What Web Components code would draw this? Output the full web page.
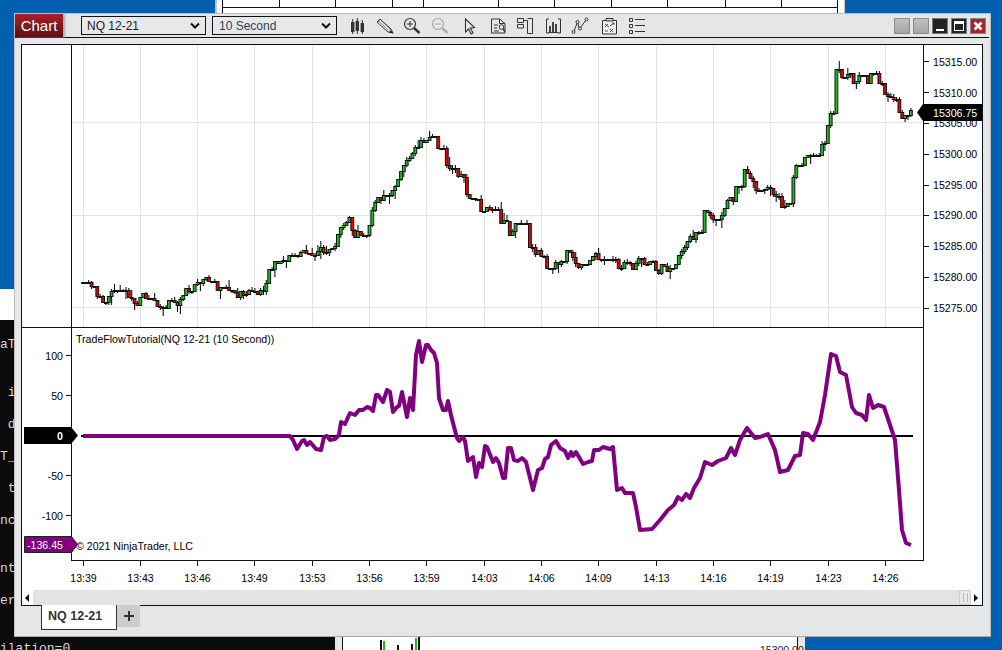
<!DOCTYPE html>
<html><head><meta charset="utf-8"><title>Chart</title>
<style>html,body{margin:0;padding:0;background:#0060b0;overflow:hidden}</style></head>
<body>
<nt-desktop>
  <nt-terminal slot="back"></nt-terminal>
  <nt-backwin slot="back"></nt-backwin>
  <nt-window>
    <nt-titlebar slot="title">
      <nt-select>NQ 12-21</nt-select>
      <nt-select tint>10 Second</nt-select>
    </nt-titlebar>
    <nt-chart></nt-chart>
    <nt-tabs slot="tabs"></nt-tabs>
  </nt-window>
</nt-desktop>
<script>
const def=(n,css,html,extra)=>{customElements.define(n,class extends HTMLElement{
  constructor(){super();this.attachShadow({mode:'open'}).innerHTML=`<style>${css}</style>${typeof html==='function'?html():html}`;}
});};
const FONT='"Liberation Sans",Arial,sans-serif';

def('nt-desktop',`:host{display:block;position:relative;width:1002px;height:650px;overflow:hidden;background:#0060b0;font-family:${FONT}}`,
 `<slot name="back"></slot><slot></slot>`);

def('nt-terminal',`:host{display:block;position:absolute;left:0;top:289px;width:335px;height:361px;background:#fff}
 .k{position:absolute;left:0;top:31px;right:0;bottom:0;background:#0b0b0b;color:#d8d8d8;font:13px/16px "Liberation Mono",monospace;padding-top:17px;box-sizing:border-box}
 .col{width:14px;height:304px;overflow:hidden;white-space:pre}
 .last{width:80px;white-space:pre}`,
 `<div class="k"><div class="col">${['aT','','',' i','',' d','','T_','',' t','','nc','','','nt','','er','',''].join('\n')}</div><div class="last">ilation=0</div></div>`);

def('nt-backwin',`:host{display:contents}
 .top{position:absolute;left:215px;top:0;width:630px;height:13px;background:#fff;border-left:2px solid #c4c4c4;border-right:1px solid #c4c4c4;box-sizing:border-box}
 .bot{position:absolute;left:335px;top:637px;width:470px;height:13px;background:#e4e6e8}
 svg{display:block;position:absolute;left:0;top:0}`,
 ()=>{
  const ticks=[279,335,392,423,498,554,611,667,725,781].map(x=>`<path d="M${x+.5-217} 0V7" stroke="#111"/>`).join('');
  const c=[[381,640,650,'#111'],[384,641,650,'#1db81d'],[398,645,650,'#111'],[412,644,650,'#111'],[416,638,650,'#1db81d'],[419,637,650,'#111']]
    .map(([x,a,b,s])=>`<path d="M${x-335} ${a-637}V${b-637}" stroke="${s}" stroke-width="2"/>`).join('');
  return `<div class="top"><svg width="627" height="13"><path d="M5.5 0V13M620.5 0V13M5 7.5H621" stroke="#111" fill="none"/>${ticks}</svg></div>
  <div class="bot"><svg width="470" height="13"><rect x="7" width="456" height="13" fill="#fff"/><path d="M7.5 0V13M462.5 0V13" stroke="#111"/>${c}
  <text x="425" y="17" font-family='"Liberation Sans",sans-serif' font-size="10.5" fill="#222">15300.00</text></svg></div>`;
 });

def('nt-window',`:host{display:flex;flex-direction:column;position:absolute;left:14px;top:13px;width:977px;height:624px;box-sizing:border-box;background:#e4e6e8;border:1px solid #bdbdbd;border-bottom-color:#a9a9a9}
 .body{padding:6px 7px 0 6px;flex:none}
 `,`<slot name="title"></slot><div class="body"><slot></slot></div><slot name="tabs"></slot>`);

const icons=[
 `<path d="M9.7 5V20M14.3 4V20M19.3 6V20" stroke="#333"/><rect x="8" y="8" width="3.4" height="10" fill="#333"/><rect x="12.6" y="7" width="3.4" height="10" fill="#333"/><rect x="17.6" y="9" width="3.4" height="9" fill="#333"/>`,
 `<path d="M6 8L9 5L20 15L22 19L17 18Z" fill="#fff" stroke="#333"/><path d="M8 7.5L18.5 17M10 6.5L19.5 15.5M7 8L9.5 6" stroke="#555" stroke-width=".8"/><path d="M19.8 16L22.5 19.5L18 18.6Z" fill="#222"/>`,
 `<circle cx="11" cy="10" r="5.5" fill="none" stroke="#333" stroke-width="1.2"/><path d="M8 10H14M11 7V13" stroke="#333"/><path d="M15 14L20.5 19" stroke="#333" stroke-width="2.4"/>`,
 `<circle cx="11" cy="10" r="5.5" fill="none" stroke="#aaa" stroke-width="1.2"/><path d="M8 10H14" stroke="#aaa"/><path d="M15 14L20.5 19" stroke="#aaa" stroke-width="2.4"/>`,
 `<path d="M10.5 5L19.5 13.5L15.5 14L18 19L16 20L13.7 15L10.5 18Z" fill="none" stroke="#333" stroke-width="1.1"/>`,
 `<path d="M16.5 5H8.5V19H22V9.5Z M16.5 5V9.5H22" fill="none" stroke="#333"/><path d="M11 11H15M11 14H14M11 17H16" stroke="#333"/><circle cx="18.5" cy="13" r="2.3" fill="#e4e6e8" stroke="#333"/><path d="M20 15L22 17.5" stroke="#333" stroke-width="1.5"/>`,
 `<path d="M6.5 4.5H12.5V8.5H6.5ZM6.5 10.5H12.5V14H6.5ZM12.5 6.5H16.5V19.5H21.5V4.5H16.5" fill="none" stroke="#333"/>`,
 `<path d="M10 5H7.5V19H10M19 5H21.5V19H19" fill="none" stroke="#333"/><path d="M11 12V18M14 8V18M17 10V18" stroke="#333" stroke-width="1.8"/><path d="M9.5 18.5H19.5" stroke="#333"/>`,
 `<path d="M6.5 18.5L10.5 8L12.5 15L19 6" fill="none" stroke="#333"/><circle cx="6.5" cy="18" r="1.5" fill="#e4e6e8" stroke="#333"/><circle cx="10.5" cy="8" r="1.5" fill="#e4e6e8" stroke="#333"/><circle cx="13" cy="14.5" r="1.5" fill="#e4e6e8" stroke="#333"/><circle cx="19.5" cy="5.5" r="1.5" fill="#e4e6e8" stroke="#333"/>`,
 `<path d="M7.5 6.5H21.5V20H7.5Z" fill="#f0f0f0" stroke="#333"/><path d="M11 4.5H18V7H11Z" fill="#ddd" stroke="#333"/><path d="M10 10L14 13M10 13L13 10M15 12L19 9M17 9H19V11M15 15L18 18M18 15L15 18M10 17H13" stroke="#444" stroke-width=".9" fill="none"/>`,
 `<path d="M6.5 4.5H9.5V7.5H6.5ZM6.5 10.5H9.5V13.5H6.5ZM6.5 16.5H9.5V19.5H6.5Z" fill="none" stroke="#333"/><path d="M12 5.5H22M12 11.5H22M12 17.5H22" stroke="#333"/>`
];
def('nt-titlebar',`:host{display:flex;align-items:center;height:24px;box-sizing:border-box;border-bottom:1px solid #111;font-family:${FONT};flex:none;width:974px}
 .chart{width:48px;height:23px;box-sizing:border-box;background:linear-gradient(#ad2027,#5b1015);color:#fff;font-size:15px;line-height:23px;text-align:center;box-shadow:2px 0 2px #aaa;flex:none}
 .sel{display:flex;gap:6px;margin-left:18px;flex:none}
 .tools{display:flex;margin-left:6px;flex:none}
 .tools svg{display:block;width:28px;height:24px}
 .wb{display:flex;gap:3px;margin-left:auto;margin-right:3px;flex:none}
 .b{width:16px;height:16px;box-sizing:border-box;border:1px solid #8c8c8c;background:linear-gradient(#c0bebe,#a6a4a4)}
 .d{background:#232325;border-color:#77797b;position:relative}
 .min::after{content:"";position:absolute;left:3px;right:3px;bottom:2px;height:2px;background:#fff}
 .max::after{content:"";position:absolute;left:2px;right:2px;top:2px;bottom:2px;border:1px solid #fff;border-top-width:3px;box-sizing:border-box}
 .x{background:#a8242c;border-color:#888;padding:0}
 .x svg{display:block}`,
 `<div class="chart">Chart</div><div class="sel"><slot></slot></div>
 <div class="tools">${icons.map(i=>`<svg viewBox="0 0 28 24">${i}</svg>`).join('')}</div>
 <div class="wb"><div class="b"></div><div class="b"></div><div class="b d min"></div><div class="b d max"></div>
 <div class="b x"><svg width="14" height="14"><path d="M3.5 3.5L10.5 10.5M10.5 3.5L3.5 10.5" stroke="#fff" stroke-width="2.6"/></svg></div></div>`);

customElements.define('nt-select',class extends HTMLElement{constructor(){super();
 this.attachShadow({mode:'open'}).innerHTML=`<style>:host{display:flex;align-items:center;width:125px;height:19px;box-sizing:border-box;border:1px solid #111;padding:0 5px;font:12px ${FONT};color:#1c1c1c;background:#e6e8e9}
 :host([tint]){color:#3a3a55;padding-left:6px}
 span{flex:1}svg{display:block}</style><span><slot></slot></span><svg width="10" height="8"><path d="M1 1.5L5 5.5L9 1.5" fill="none" stroke="#111" stroke-width="2"/></svg>`;}});

def('nt-tabs',`:host{display:flex;margin:-1px 0 0 26px;flex:none;font-family:${FONT};position:relative}
 .t{width:76px;height:25px;box-sizing:border-box;background:#fff;border:1px solid #333;border-top:none;font-weight:700;font-size:12.5px;line-height:23px;padding-left:6px;color:#333}
 .p{width:23px;height:22px;background:#cdcdcd;display:flex;align-items:center;justify-content:center}`,
 `<div class="t">NQ 12-21</div><div class="p"><svg width="12" height="12"><path d="M6 1V11M1 6H11" stroke="#333" stroke-width="2"/></svg></div>`);

/* chart */
const PTS=[[83,282],[88,283],[93,285],[94,295],[108,302],[112,293],[115,288],[122,297],[125,307],[128,293],[138,303],[142,294],[152,298],[160,305],[167,309],[169,302],[177,302],[180,307],[182,297],[187,290],[193,287],[200,280],[207,280],[213,285],[227,292],[233,290],[237,295],[247,293],[252,288],[260,293],[267,285],[272,263],[282,263],[283,261],[292,257],[297,263],[300,253],[310,250],[318,255],[323,248],[332,252],[338,240],[340,227],[345,228],[350,216],[355,235],[363,232],[370,225],[375,205],[378,195],[383,198],[388,188],[395,192],[402,173],[408,160],[415,151],[420,145],[425,139],[435,139],[438,148],[445,150],[449,167],[455,165],[458,178],[464,174],[468,197],[475,194],[478,210],[483,212],[488,207],[497,210],[500,221],[508,219],[511,233],[515,227],[520,222],[527,223],[528,238],[535,253],[540,252],[545,255],[548,265],[555,266],[558,262],[565,260],[568,253],[575,258],[578,266],[588,265],[592,260],[595,254],[607,260],[613,263],[617,273],[622,268],[625,262],[633,263],[636,272],[638,257],[642,257],[645,265],[650,259],[657,268],[660,271],[662,263],[668,270],[675,269],[679,258],[685,247],[690,236],[696,237],[700,228],[703,213],[710,210],[713,223],[717,216],[722,217],[725,211],[730,197],[734,203],[737,183],[740,177],[747,170],[753,177],[757,187],[763,188],[768,187],[777,194],[779,209],[783,205],[788,210],[791,185],[794,176],[797,165],[802,167],[803,156],[807,158],[812,153],[820,152],[823,142],[828,139],[829,120],[833,107],[836,87],[837,66],[841,66],[844,78],[847,76],[852,72],[853,81],[860,77],[864,67],[867,82],[871,83],[872,66],[877,66],[878,78],[883,86],[886,96],[892,97],[897,102],[900,112],[905,118],[909,113],[912,112]];
const IND=[[83,436],[290,436],[293,440],[297,449],[302,441],[304,440],[307,445],[310,442],[316,449],[321,450],[324,437],[327,436],[330,440],[335,439],[339,435],[341,422],[345,424],[350,413],[355,415],[359,410],[363,410],[367,407],[370,408],[373,411],[376,395],[378,395],[383,402],[387,390],[390,392],[393,412],[397,407],[399,406],[402,392],[407,417],[410,398],[413,410],[416,355],[419,341],[422,362],[426,345],[428,345],[431,350],[434,353],[437,363],[439,398],[443,410],[446,410],[448,401],[451,415],[453,423],[457,438],[459,441],[463,437],[465,441],[468,461],[473,457],[476,477],[479,463],[482,467],[485,446],[487,447],[493,462],[496,458],[499,463],[503,478],[505,478],[508,448],[511,448],[514,460],[518,461],[522,458],[526,462],[533,490],[538,470],[542,468],[545,459],[548,457],[551,445],[556,441],[560,448],[565,451],[568,458],[571,452],[573,456],[576,452],[583,464],[588,462],[592,461],[594,450],[599,450],[603,447],[610,449],[613,447],[617,490],[622,488],[625,493],[633,493],[636,507],[640,530],[652,529],[660,520],[668,510],[674,505],[678,497],[682,500],[686,494],[690,498],[694,488],[700,478],[705,462],[712,465],[718,461],[726,458],[731,448],[735,455],[740,440],[747,428],[755,438],[760,437],[768,434],[775,450],[780,472],[788,470],[795,456],[800,455],[803,433],[808,434],[813,440],[820,422],[825,395],[831,354],[836,356],[840,372],[846,375],[852,407],[856,413],[862,415],[866,420],[869,395],[873,408],[878,405],[884,407],[890,425],[895,440],[899,490],[902,530],[906,543],[911,545]];
function interp(x){for(let i=1;i<PTS.length;i++){if(x<=PTS[i][0]){const a=PTS[i-1],b=PTS[i],d=b[0]-a[0]||1;return a[1]+(b[1]-a[1])*(x-a[0])/d;}}return PTS[PTS.length-1][1];}
let seed=4711;const rnd=()=>{seed=(seed*1664525+1013904223)>>>0;return seed/4294967296;};
function candles(){
 let out='',prev=282;const dx=2.8646;
 for(let i=0;i<290;i++){
  const x=83+i*dx;
  if(x>913)break;
  const hold=rnd()<.25;
  const close=hold?prev:Math.round(interp(x+1)+(rnd()-.5)*6);
  const open=Math.round(prev);
  const top=Math.min(open,close),bot=Math.max(open,close);
  const wt=rnd()<.55?Math.round(1+rnd()*(rnd()<.25?7:2)):0, wb=rnd()<.55?Math.round(1+rnd()*(rnd()<.3?9:3)):0;
  out+=`<path d="M${x.toFixed(1)} ${top-wt}V${bot+wb}" stroke="#111" stroke-width="1.1"/>`;
  const h=Math.max(bot-top,1);
  out+=`<rect x="${(x-1.4).toFixed(1)}" y="${top+.5}" width="2.8" height="${h}" fill="${close<=open?'#14c21e':'#f00000'}" stroke="#111" stroke-width="1"/>`;
  prev=close;
 }
 return out;
}
const GX=[83,140,197,254,312,369,426,484,541,598,656,713,770,828,885];
const TL=['13:39','13:43','13:46','13:49','13:53','13:56','13:59','14:03','14:06','14:09','14:13','14:16','14:19','14:23','14:26'];
const PR=[[61.5,'15315.00'],[92.5,'15310.00'],[123,'15305.00'],[154,'15300.00'],[185,'15295.00'],[215,'15290.00'],[246,'15285.00'],[277,'15280.00'],[308,'15275.00']];
const LA=[[356,'100'],[396,'50'],[476,'-50'],[516,'-100']];
function chartSvg(){
 let s='';
 GX.forEach(x=>s+=`<path d="M${x+.5} 45V327" stroke="#e3e3e3"/>`);
 [122,215,307].forEach(y=>s+=`<path d="M73 ${y+.5}H923" stroke="#e3e3e3"/>`);
 s+=candles();
 s+=`<path d="M71.5 45V560M923.5 45V560M22 327.5H923M71 560.5H924" stroke="#111" fill="none"/>`;
 GX.forEach((x,i)=>s+=`<path d="M${x+.5} 560V566" stroke="#111"/><text x="${x+.5}" y="582" text-anchor="middle">${TL[i]}</text>`);
 PR.forEach(([y,t])=>s+=`<path d="M924 ${Math.floor(y)+.5}H929" stroke="#111"/><text x="933" y="${y+4}">${t}</text>`);
 LA.forEach(([y,t])=>s+=`<path d="M66 ${y-.5}H71" stroke="#111"/><text x="63" y="${y+3.5}" text-anchor="end">${t}</text>`);
 s+=`<path d="M66 436H71" stroke="#111"/>`;
 s+=`<text x="76" y="343">TradeFlowTutorial(NQ 12-21 (10 Second))</text><text x="76" y="550">© 2021 NinjaTrader, LLC</text>`;
 s+=`<path d="M84 436H913" stroke="#000" stroke-width="2"/>`;
 s+=`<polyline points="${IND.map(p=>p.join(',')).join(' ')}" fill="none" stroke="#800080" stroke-width="4" stroke-linejoin="round"/>`;
 s+=`<rect x="81" y="435" width="2" height="2" fill="#000"/>`;
 s+=`<path d="M923 104H983V121H923L917 112.5Z" fill="#000"/><text x="933" y="117" fill="#fff" font-weight="400">15306.75</text>`;
 s+=`<path d="M24 427H71L78 435.5L71 444H24Z" fill="#000"/><text x="60" y="440" fill="#fff" font-weight="700" text-anchor="middle">0</text>`;
 s+=`<path d="M24.5 536.5H71.5L77.5 544.5L71.5 552.5H24.5Z" fill="#800080" stroke="#222"/><text x="27" y="549" fill="#fff">-136.45</text>`;
 return `<svg width="960" height="545" viewBox="22 45 960 545" font-family='"Liberation Sans",sans-serif' font-size="10.6" fill="#000">${s}</svg>`;
}
def('nt-chart',`:host{display:flex;flex-direction:column;width:962px;height:562px;box-sizing:border-box;border:1px solid #111;background:#fff}
 svg{display:block;flex:none}
 .sb{display:flex;flex:1;background:#e3e3e3;align-items:stretch}
 .btn{width:11px;background:#fff;display:flex;align-items:center;justify-content:center}
 .th{width:12px;margin-left:auto;background:#e9e9e9;border:1px solid #cfcfcf;box-sizing:border-box;display:flex;align-items:center;justify-content:center}
 .th i{display:block;width:3px;height:9px;border-left:1px solid #bbb;border-right:1px solid #bbb}`,
 ()=>chartSvg()+`<div class="sb"><div class="btn"><svg width="5" height="8"><path d="M4 0V8L0 4Z" fill="#111"/></svg></div><div class="th"><i></i></div><div class="btn"><svg width="5" height="8"><path d="M0 0V8L4 4Z" fill="#111"/></svg></div></div>`);
</script>
</body></html>
